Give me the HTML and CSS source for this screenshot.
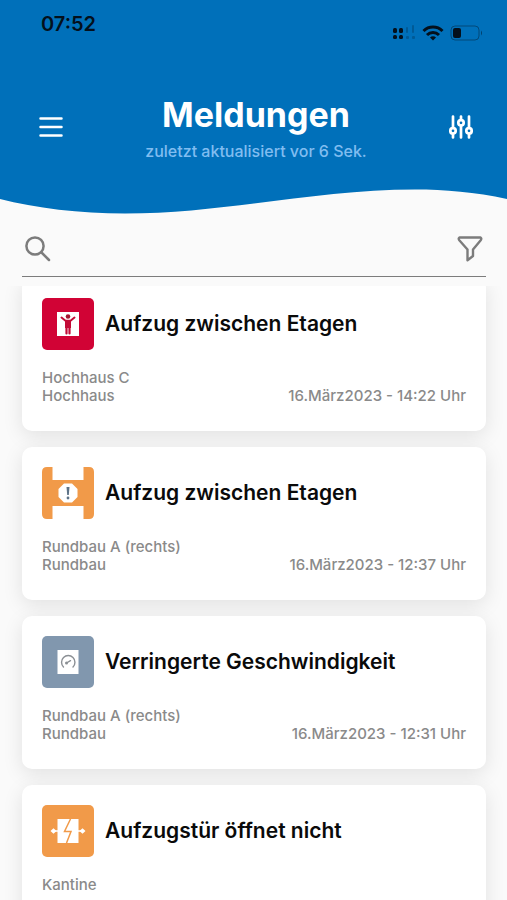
FILE: index.html
```html
<!DOCTYPE html>
<html lang="de">
<head>
    <meta charset="UTF-8">
    <meta name="viewport" content="width=device-width, initial-scale=1.0">
    <title>Meldungen</title>
    <link rel="stylesheet" href="styles.css">
</head>
<body>
    <div class="app">
        <header class="header">
            <div class="status-bar">
                <span class="time">07:52</span>
                <div class="status-icons">
                    <svg width="24" height="16" viewBox="0 0 24 16">
                        <g fill="#04101c">
                            <rect x="1" y="3" width="4" height="5" rx="1.5"/>
                            <rect x="7" y="3" width="4" height="5" rx="1.5"/>
                            <rect x="1" y="10" width="4" height="4" rx="1.5"/>
                            <rect x="7" y="10" width="4" height="4" rx="1.5"/>
                        </g>
                        <g fill="#04101c" opacity="0.22">
                            <rect x="14" y="2" width="2" height="6" rx="1"/>
                            <rect x="20" y="0" width="2" height="8" rx="1"/>
                            <rect x="14" y="11" width="3" height="3" rx="1"/>
                            <rect x="20" y="11" width="3" height="3" rx="1"/>
                        </g>
                    </svg>
                    <svg width="22" height="16" viewBox="0 0 22 16" fill="none" stroke="#04101c" stroke-width="3">
                        <path d="M1.5 6a13.5 13.5 0 0 1 19 0"/>
                        <path d="M5 10a8.5 8.5 0 0 1 12 0"/>
                        <path d="M11 15.5l-3-3a4.2 4.2 0 0 1 6 0z" fill="#04101c" stroke="none"/>
                    </svg>
                    <svg width="33" height="16" viewBox="0 0 33 16">
                        <rect x="1" y="1" width="28" height="14" rx="4" fill="none" stroke="#04101c" stroke-opacity="0.4"/>
                        <rect x="3" y="3" width="8" height="10" rx="2" fill="#04101c"/>
                        <path d="M31 5.5q2 2.5 0 5z" fill="#04101c" opacity="0.5"/>
                    </svg>
                </div>
            </div>
            <div class="nav">
                <button class="icon-btn" aria-label="Menü">
                    <svg width="24" height="24" viewBox="0 0 24 24" stroke="#fff" stroke-width="2.5" stroke-linecap="round">
                        <path d="M1.5 3.5h21M1.5 12h21M1.5 20.5h21"/>
                    </svg>
                </button>
                <div class="heading">
                    <h1>Meldungen</h1>
                    <p>zuletzt aktualisiert vor 6 Sek.</p>
                </div>
                <button class="icon-btn" aria-label="Einstellungen">
                    <svg width="24" height="24" viewBox="0 0 24 24" fill="none" stroke="#fff" stroke-width="2.7" stroke-linecap="round">
                        <path d="M4 1.5v11M4 19v3.5M12 1.5v3M12 11v11.5M20 1.5v11M20 19v3.5"/>
                        <circle cx="4" cy="15.8" r="2.7"/>
                        <circle cx="12" cy="7.8" r="2.7"/>
                        <circle cx="20" cy="15.8" r="2.7"/>
                    </svg>
                </button>
            </div>
        </header>
        <svg class="wave" viewBox="0 0 507 26" preserveAspectRatio="none">
            <path d="M0 0H507V11C475 4 445 1.5 415 1.5C315 1.5 225 25.5 125 25.5C80 25.5 35 20 0 11Z" fill="#0070ba"/>
        </svg>

        <div class="search">
            <label for="search">
                <svg width="26" height="26" viewBox="0 0 26 26" fill="none" stroke="#7c7c7c" stroke-width="2.5" stroke-linecap="round">
                    <circle cx="10" cy="10" r="8.6"/>
                    <path d="M16.5 16.5l7.5 7.5"/>
                </svg>
            </label>
            <input type="text" id="search" aria-label="Suche">
            <button class="icon-btn" aria-label="Filter">
                <svg width="26" height="26" viewBox="0 0 26 26" fill="none" stroke="#7c7c7c" stroke-width="2.4" stroke-linejoin="round">
                    <path d="M2.5 1.5h21q1.5 1 .2 2.7l-7.7 9.3v6.5l-5.5 4.3v-10.8l-8.2-9.3q-1.3-1.7.2-2.7z"/>
                </svg>
            </button>
        </div>

        <main class="list">
            <article class="card">
                <div class="card-head">
                    <svg width="52" height="52" viewBox="0 0 52 52">
                        <rect width="52" height="52" rx="5" fill="#d10335"/>
                        <rect x="15" y="14" width="22" height="24" fill="#fff"/>
                        <g fill="none" stroke="#c20a36" stroke-linecap="round">
                            <path d="M19.5 19.5l4 3.2h5l4-3.2" stroke-width="2" stroke-linejoin="round"/>
                            <path d="M24.5 28v7.5M27.5 28v7.5" stroke-width="2.2"/>
                        </g>
                        <path d="M23 22h6v8h-6z" fill="#c20a36"/>
                        <circle cx="26" cy="18.5" r="2.3" fill="#a3142f"/>
                    </svg>
                    <h2>Aufzug zwischen Etagen</h2>
                </div>
                <div class="card-meta">
                    <p>Hochhaus C<br>Hochhaus</p>
                    <time datetime="2023-03-16T14:22">16.März2023 - 14:22 Uhr</time>
                </div>
            </article>

            <article class="card">
                <div class="card-head">
                    <svg width="52" height="52" viewBox="0 0 52 52">
                        <path d="M5 0h5.5v13h31V0H47q5 0 5 5v42q0 5-5 5h-5.5V39h-31v13H5q-5 0-5-5V5q0-5 5-5z" fill="#f19a49"/>
                        <path d="M22 16.5h8l5.5 5.5v8l-5.5 5.5h-8L16.5 30v-8z" fill="#fff"/>
                        <path d="M24.5 20h3l-.7 8h-1.6z" fill="#5d7286"/>
                        <circle cx="26" cy="31" r="1.4" fill="#5d7286"/>
                    </svg>
                    <h2>Aufzug zwischen Etagen</h2>
                </div>
                <div class="card-meta">
                    <p>Rundbau A (rechts)<br>Rundbau</p>
                    <time datetime="2023-03-16T12:37">16.März2023 - 12:37 Uhr</time>
                </div>
            </article>

            <article class="card">
                <div class="card-head">
                    <svg width="52" height="52" viewBox="0 0 52 52">
                        <rect width="52" height="52" rx="5" fill="#8197ae"/>
                        <rect x="15.5" y="14" width="21" height="24" fill="#fff"/>
                        <g fill="none" stroke="#8b8f94" stroke-width="1.4" stroke-linecap="round">
                            <path d="M21.5 31a6.7 6.7 0 1 1 9.5 0"/>
                            <path d="M24.5 27l4-2.3"/>
                        </g>
                        <circle cx="24.5" cy="27" r="1.5" fill="#8b8f94"/>
                    </svg>
                    <h2>Verringerte Geschwindigkeit</h2>
                </div>
                <div class="card-meta">
                    <p>Rundbau A (rechts)<br>Rundbau</p>
                    <time datetime="2023-03-16T12:31">16.März2023 - 12:31 Uhr</time>
                </div>
            </article>

            <article class="card">
                <div class="card-head">
                    <svg width="52" height="52" viewBox="0 0 52 52">
                        <rect width="52" height="52" rx="5" fill="#f19a49"/>
                        <rect x="15.5" y="14" width="21" height="24" fill="#fff"/>
                        <path d="M28.5 14l-6 12.5h6.5l-4.5 11.5M23 26.5h5.5" fill="none" stroke="#f19a49" stroke-width="1.5"/>
                        <path d="M10 26h6M36 26h6" stroke="#fff" stroke-width="1.5"/>
                        <path d="M8.5 26l3-2.8 3 2.8-3 2.8zM43.5 26l-3-2.8-3 2.8 3 2.8z" fill="#fff"/>
                    </svg>
                    <h2>Aufzugstür öffnet nicht</h2>
                </div>
                <div class="card-meta">
                    <p>Kantine</p>
                </div>
            </article>
        </main>
    </div>
</body>
</html>
```
FILE: styles.css
```css
* {
    box-sizing: border-box;
}
body {
    margin: 0;
    font-family: Inter, "Liberation Sans", sans-serif;
    background: #fafafa;
    color: #0a0a0a;
}
h1, h2, p {
    margin: 0;
}
svg {
    display: block;
    flex-shrink: 0;
}
.app {
    display: flex;
    flex-direction: column;
    height: 100vh;
}
.header {
    background: #0070ba;
    padding: 12px 24px 25px 39px;
}
.status-bar {
    display: flex;
    justify-content: space-between;
    height: 40px;
    padding-left: 2px;
}
.time {
    font-size: 20px;
    font-weight: 600;
    line-height: 24px;
    color: #04101c;
}
.status-icons {
    display: flex;
    gap: 6px;
    padding-top: 13px;
}
.nav {
    display: flex;
    align-items: center;
    justify-content: space-between;
    padding: 39px 10px 0 0;
}
.icon-btn {
    background: none;
    border: none;
    padding: 0;
    cursor: pointer;
}
.heading {
    text-align: center;
    color: #fff;
}
.heading h1 {
    font-size: 34px;
    font-weight: 700;
    line-height: 48px;
}
.heading p {
    font-size: 16px;
    font-weight: 500;
    line-height: 24px;
    color: #80bdf0;
}
.wave {
    width: 100%;
    height: 26px;
}
.search {
    display: flex;
    align-items: center;
    gap: 8px;
    height: 55px;
    margin: 8px 21px 0 22px;
    padding: 0 3px;
    border-bottom: 1px solid #7c7c7c;
}
.search input {
    flex: 1;
    min-width: 0;
    border: none;
    outline: none;
    background: none;
    font: inherit;
}
.list {
    flex: 1;
    min-height: 0;
    margin-top: 9px;
    padding: 0 21px 0 22px;
    overflow-y: auto;
    scrollbar-width: none;
}
.card {
    background: #fff;
    border-radius: 10px;
    margin-bottom: 16px;
    padding: 20px 20px 26px;
    box-shadow: 0 5px 20px rgba(0, 0, 0, 0.1);
}
/* the list is scrolled slightly under the search bar */
.card:first-child {
    margin-top: -8px;
}
.card-head {
    display: flex;
    align-items: center;
    gap: 11px;
}
.card-head h2 {
    font-size: 21px;
    font-weight: 600;
    line-height: 28px;
}
.card-meta {
    display: flex;
    justify-content: space-between;
    align-items: flex-end;
    margin-top: 19px;
    font-size: 15px;
    font-weight: 500;
    line-height: 18px;
    color: #8a8a8a;
}
```
